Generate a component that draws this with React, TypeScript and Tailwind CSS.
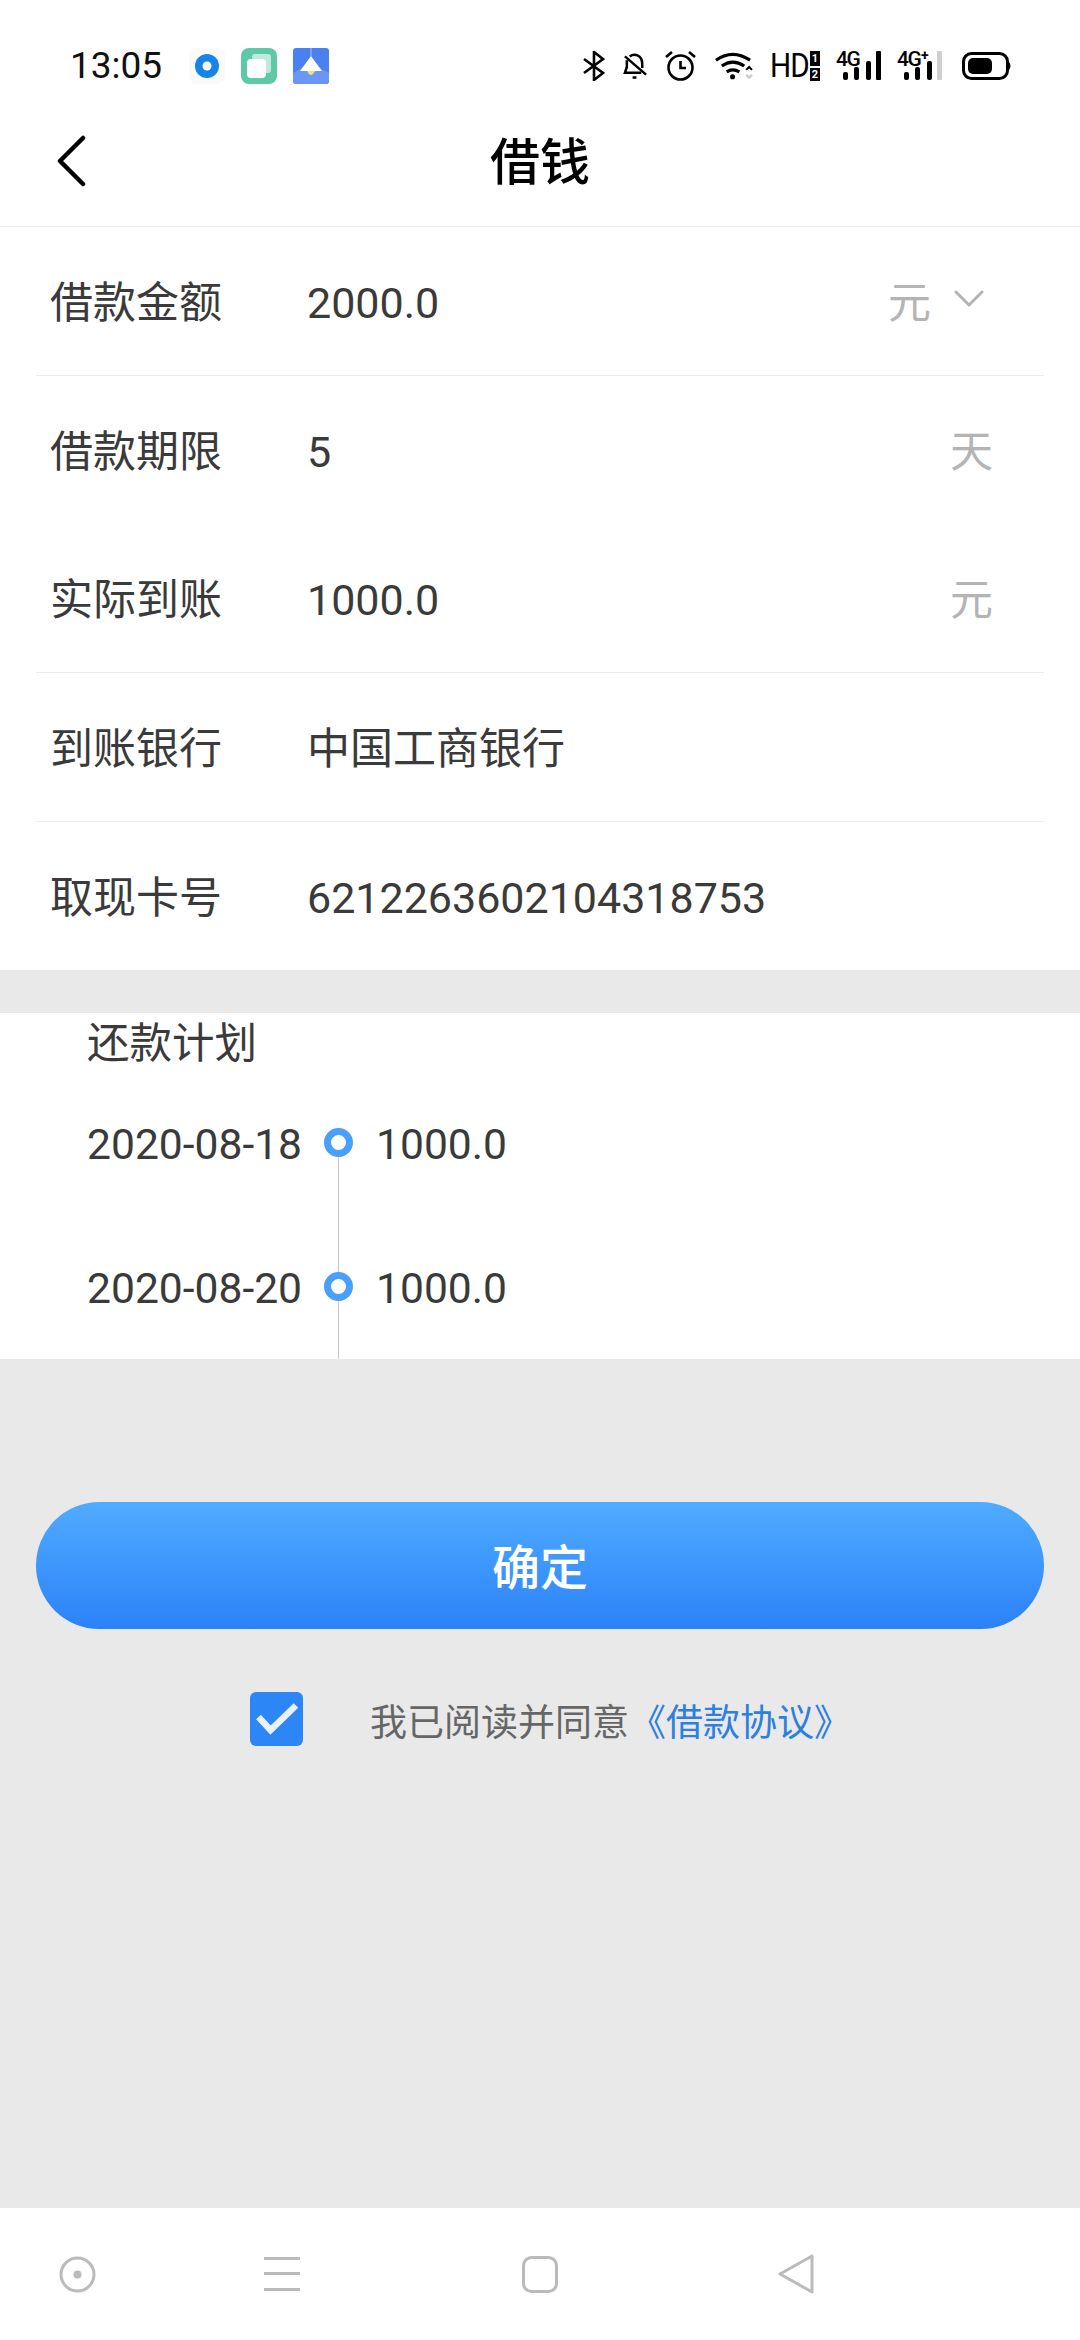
const rows = [
  { label: '借款金额', value: '2000.0', unit: '元', dropdown: true, line: true },
  { label: '借款期限', value: '5', unit: '天', line: false },
  { label: '实际到账', value: '1000.0', unit: '元', line: true },
  { label: '到账银行', value: '中国工商银行', line: true },
  { label: '取现卡号', value: '6212263602104318753', line: false },
]

const plans = [
  { date: '2020-08-18', amount: '1000.0' },
  { date: '2020-08-20', amount: '1000.0' },
]

function AppIcons() {
  return (
    <div className="flex items-center gap-[16px] ml-[27px]">
      <svg width="36" height="36" viewBox="0 0 36 36">
        <rect width="36" height="36" rx="8" fill="#fafafa" />
        <circle cx="18" cy="18" r="12" fill="#1685ea" />
        <circle cx="18" cy="18" r="4.5" fill="#fff" />
      </svg>
      <svg width="36" height="36" viewBox="0 0 36 36">
        <rect width="36" height="36" rx="8" fill="#5fc8a6" />
        <rect x="11" y="6" width="19" height="19" rx="3" fill="#bfe9da" />
        <rect x="6" y="11" width="19" height="19" rx="4" fill="#fff" />
      </svg>
      <svg width="36" height="36" viewBox="0 0 36 36">
        <rect width="36" height="36" rx="3" fill="#4a80f0" />
        <path d="M0 25 L18 15 L36 25 V33 Q36 36 33 36 H3 Q0 36 0 33 Z" fill="#6a97f3" />
        <path d="M18 0 V8" stroke="#a9c4f8" strokeWidth="1" />
        <path d="M18 8 L29 23 H7 Z" fill="#fff" />
        <path d="M14 23 H22 Q20 27 18 27 Q16 27 14 23 Z" fill="#f6dc7c" />
      </svg>
    </div>
  )
}

function SignalBars({ last }: { last: string }) {
  return (
    <svg className="absolute inset-0" width="45" height="32" viewBox="0 0 45 32" fill="#000">
      <rect x="7" y="22" width="5" height="8" rx="2" />
      <rect x="18" y="17" width="5" height="13" rx="2" />
      <rect x="30" y="11" width="5" height="19" rx="2" />
      <rect x="40" y="1" width="5" height="29" rx="1" fill={last} />
    </svg>
  )
}

function StatusIcons() {
  return (
    <div className="flex items-center ml-auto mr-[68px] text-black">
      <svg width="22" height="30" viewBox="0 0 22 30" fill="none" stroke="#000" strokeWidth="2.6">
        <path d="M1 8 L20 22 L11 29 V1 L20 8 L1 22" />
      </svg>
      <svg className="ml-[18px]" width="25" height="30" viewBox="0 0 26 30" fill="none" stroke="#000" strokeWidth="2.6">
        <path d="M4 9 V16 L2 22 H19 M7 5 Q11 2 15 4 Q20 6 20 13 V17" />
        <path d="M2 5 L24 24" />
        <path d="M10 27 H14" />
      </svg>
      <svg className="ml-[17px]" width="31" height="30" viewBox="0 0 31 30" fill="none" stroke="#000" strokeWidth="2.6">
        <circle cx="15.5" cy="16.5" r="12" />
        <path d="M15.5 10 V17 H21" />
        <path d="M1 6 L7 1 M30 6 L24 1" />
      </svg>
      <svg className="ml-[19px]" width="39" height="30" viewBox="0 0 40 30" fill="none" stroke="#000" strokeWidth="3.2">
        <path d="M1 9 Q18 -3 36 9" />
        <path d="M7 15 Q18 7 30 15" />
        <path d="M12 21 Q18 17 25 21" />
        <circle cx="18" cy="26" r="2.6" fill="#000" stroke="none" />
        <path d="M32 19 L35 16 L38 19" strokeWidth="2" />
        <path d="M32 24 L35 27 L38 24" stroke="#c8c8c8" strokeWidth="2.4" />
      </svg>
      <div className="ml-[16px] flex items-center">
        <span className="font-['Roboto',sans-serif] text-[33px] leading-[30px] tracking-[-1px] scale-x-90 origin-left w-[39px]">HD</span>
        <div className="flex flex-col gap-[2px] ml-[1px]">
          <span className="w-[10px] h-[15px] bg-black text-white text-[11px] leading-[15px] text-center font-bold font-['Roboto',sans-serif]">1</span>
          <span className="w-[10px] h-[13px] bg-black text-white text-[11px] leading-[13px] text-center font-bold font-['Roboto',sans-serif]">2</span>
        </div>
      </div>
      <div className="ml-[16px] w-[45px] h-[32px] relative">
        <span className="absolute left-0 top-[0px] font-['Roboto',sans-serif] font-medium text-[21px] leading-[18px] tracking-[-1.5px]">4G</span>
        <SignalBars last="#000" />
      </div>
      <div className="ml-[16px] w-[45px] h-[32px] relative">
        <span className="absolute left-0 top-[0px] font-['Roboto',sans-serif] font-medium text-[21px] leading-[18px] tracking-[-1.5px]">4G</span>
        <span className="absolute left-[24px] top-[-1px] font-['Roboto',sans-serif] font-bold text-[14px] leading-[12px]">+</span>
        <SignalBars last="#cfcfcf" />
      </div>
      <svg className="ml-[20px]" width="50" height="28" viewBox="0 0 50 28">
        <rect x="1.5" y="1.5" width="44" height="25" rx="8" fill="none" stroke="#000" strokeWidth="3" />
        <rect x="6" y="6" width="24" height="16" rx="5" fill="#000" />
        <path d="M47 10 Q50 14 47 18 Z" fill="#000" />
      </svg>
    </div>
  )
}

function FormRow({ label, value, unit, dropdown, line }: (typeof rows)[number]) {
  return (
    <div className={`mx-[36px] flex items-center pt-[4px] ${line ? 'h-[149px] border-b border-[#ebebeb]' : 'h-[148px]'}`}>
      <span className="ml-[14px] w-[257px] text-[#3a3a3a]">{label}</span>
      <span className="flex-1 text-[#3a3a3a]">{value}</span>
      {unit && <span className={`text-[#b4b4b4] ${dropdown ? 'mr-[23px]' : 'mr-[51px]'}`}>{unit}</span>}
      {dropdown && (
        <svg className="mr-[60px] mb-[8px]" width="30" height="18" viewBox="0 0 30 18" fill="none" stroke="#b4b4b4" strokeWidth="3" strokeLinecap="round" strokeLinejoin="round">
          <path d="M2 2 L15 15 L28 2" />
        </svg>
      )}
    </div>
  )
}

export default function App() {
  return (
    <div lang="zh-CN" className="w-[1080px] h-[2340px] flex flex-col bg-[#e9e9e9] font-['Roboto','Noto_Sans_CJK_SC',sans-serif] text-[43px] overflow-hidden">
      <div className="bg-white h-[227px] border-b border-[#ebebeb] flex flex-col shrink-0">
        <div className="h-[110px] pt-[21px] flex items-center">
          <span className="ml-[70px] text-[37px] text-[#111] leading-none">13:05</span>
          <AppIcons />
          <StatusIcons />
        </div>
        <div className="flex-1 relative flex items-center justify-center">
          <svg className="absolute left-[56px] top-[25px]" width="32" height="52" viewBox="0 0 32 52" fill="none" stroke="#000" strokeWidth="4.5" strokeLinecap="round" strokeLinejoin="round">
            <path d="M27 3 L4 26 L27 49" />
          </svg>
          <span className="text-[50px] font-medium text-black leading-none mb-[10px]">借钱</span>
        </div>
      </div>

      <div className="bg-white shrink-0">
        {rows.map(r => (
          <FormRow key={r.label} {...r} />
        ))}
      </div>

      <div className="bg-white mt-[43px] h-[346px] overflow-hidden shrink-0 pl-[87px] text-[#3a3a3a]">
        <div className="h-[60px] flex items-center text-[42.5px] pt-[2px]">还款计划</div>
        <div className="mt-[55px] text-[42.6px]">
          {plans.map(p => (
            <div key={p.date} className="flex h-[144px]">
              <span className="w-[237px] h-[28px] leading-[28px] mt-[2px]">{p.date}</span>
              <div className="w-[29px] flex flex-col items-center">
                <span className="w-[29px] h-[29px] rounded-full border-[7px] border-[#4a9ffb] shrink-0" />
                <span className="w-px flex-1 bg-[#c8c8c8]" />
              </div>
              <span className="ml-[23px] h-[28px] leading-[28px] mt-[2px]">{p.amount}</span>
            </div>
          ))}
        </div>
      </div>

      <div className="flex-1 px-[36px] pt-[143px]">
        <button className="w-full h-[127px] rounded-full bg-gradient-to-b from-[#50abff] to-[#2b82f8] text-white text-[48px] font-medium flex items-center justify-center pt-[6px]">
          确定
        </button>
        <div className="mt-[63px] flex items-center ml-[214px]">
          <svg width="53" height="54" viewBox="0 0 53 54" fill="none">
            <rect width="53" height="54" rx="6" fill="#2d86f5" />
            <path d="M8.5 25 L20.5 38 L46 13.5" stroke="#e8f1fd" strokeWidth="6.5" />
          </svg>
          <span className="ml-[67px] text-[37px] leading-none text-[#666] pt-[8px]">我已阅读并同意</span>
          <span className="text-[37px] leading-none text-[#2d7fe0] pt-[8px]">《借款协议》</span>
        </div>
      </div>

      <div className="bg-white h-[132px] shrink-0 flex items-center pl-[59px]">
        <svg width="37" height="37" viewBox="0 0 37 37" fill="none" stroke="#bbb" strokeWidth="3">
          <circle cx="18.5" cy="18.5" r="16.5" />
          <circle cx="18.5" cy="18.5" r="4" fill="#bbb" stroke="none" />
        </svg>
        <svg className="ml-[168px]" width="36" height="34" viewBox="0 0 36 34" fill="#bbb">
          <rect y="0" width="36" height="3" />
          <rect y="15" width="36" height="3" />
          <rect y="31" width="36" height="3" />
        </svg>
        <svg className="ml-[222px]" width="36" height="37" viewBox="0 0 36 37" fill="none" stroke="#bbb" strokeWidth="3">
          <rect x="1.5" y="1.5" width="33" height="34" rx="8" />
        </svg>
        <svg className="ml-[220px]" width="36" height="40" viewBox="0 0 36 40" fill="none" stroke="#bbb" strokeWidth="3" strokeLinejoin="round">
          <path d="M34 2 V38 L2 20 Z" />
        </svg>
      </div>
    </div>
  )
}
